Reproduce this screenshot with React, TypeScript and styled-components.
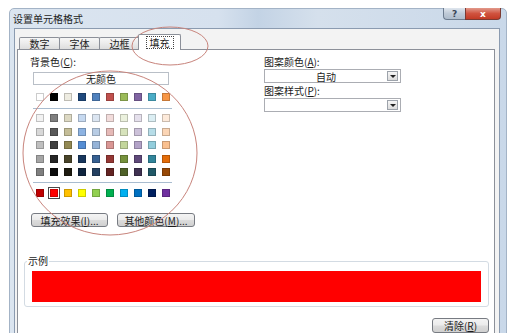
import React from 'react';
import styled, { createGlobalStyle, css } from 'styled-components';

const GlobalStyle = createGlobalStyle`
    html, body {
        margin: 0;
        padding: 0;
        background: #ffffff;
    }
    body {
        width: 508px;
        height: 333px;
        overflow: hidden;
        position: relative;
        font-family: "Noto Sans CJK SC", "Liberation Sans", sans-serif;
        font-size: 10px;
        color: #1b1b1b;
    }
`;

const Window = styled.div`
    margin: 8px 0 0 9px;
    width: 498px;
    height: 340px;
    box-sizing: border-box;
    border: 1px solid #a3b3c6;
    border-radius: 5px 5px 0 0;
    background: linear-gradient(90deg, #dbe5f0 0%, #d6e1ee 42%, #c3d3e5 50%, #d5e0ec 62%, #c9d8e9 100%);
    padding: 0 6px 0 4px;
    display: flex;
    flex-direction: column;
`;

const TitleBar = styled.div`
    height: 19px;
    display: flex;
    align-items: flex-start;
`;

const Title = styled.span`
    line-height: 19px;
    margin-left: -1px;
    color: #1e1e1e;
`;

const CaptionButtons = styled.div`
    margin: -1px -1px 0 auto;
    display: flex;
`;

const CaptionButton = styled.div<{ $close?: boolean }>`
    height: 12px;
    width: ${(p) => (p.$close ? '36px' : '22px')};
    box-sizing: border-box;
    display: flex;
    align-items: center;
    justify-content: center;
    font-family: "DejaVu Sans", sans-serif;
    font-weight: bold;
    font-size: 9px;
    color: #ffffff;
    border: 1px solid #6d7c8f;
    border-top: none;
    ${(p) =>
        p.$close
            ? css`
                  border-radius: 0 0 4px 0;
                  background: linear-gradient(180deg, #e29a8c 0%, #d0533f 50%, #c23a25 100%);
                  border-color: #7b3a32;
              `
            : css`
                  border-radius: 0 0 0 4px;
                  border-right: none;
                  background: linear-gradient(180deg, #dfe6ee 0%, #bfcad7 50%, #aebccc 100%);
                  color: #3a4656;
              `}
`;

const Client = styled.div`
    flex: 1;
    border: 1px solid #8b9bb0;
    background: #f3f3f3;
    padding: 0 4px 0 2px;
    display: flex;
    flex-direction: column;
`;

const TabRow = styled.div`
    height: 20px;
    padding-left: 2px;
    display: flex;
    align-items: flex-end;
`;

const Tab = styled.div<{ $active?: boolean }>`
    width: 41px;
    height: 12px;
    box-sizing: border-box;
    border: 1px solid #8c9099;
    border-bottom: none;
    border-radius: 2px 2px 0 0;
    background: linear-gradient(180deg, #f7f7f7 0%, #ebebeb 50%, #dddddd 100%);
    display: flex;
    align-items: center;
    justify-content: center;
    line-height: 11px;
    margin-right: -1px;
    ${(p) =>
        p.$active &&
        css`
            height: 16px;
            margin: 0 -2px -1px -1px;
            width: 43px;
            background: #ffffff;
            position: relative;
            z-index: 1;
        `}
`;

const FocusLabel = styled.span`
    outline: 1px dotted #444;
    padding: 0 3px;
    line-height: 11px;
`;

const Panel = styled.div`
    flex: 1;
    background: #ffffff;
    border: 1px solid #8c9099;
    display: flex;
    flex-direction: column;
`;

const Body = styled.div`
    display: grid;
    grid-template-columns: 234px 1fr;
    padding: 6px 0 0 12px;
`;

const Column = styled.div`
    display: flex;
    flex-direction: column;
    align-items: flex-start;
`;

const Label = styled.div<{ $top?: number }>`
    line-height: 12px;
    margin-top: ${(p) => p.$top ?? 0}px;
    white-space: nowrap;
`;

const NoColorBox = styled.div`
    margin: 4px 0 0 3px;
    width: 136px;
    height: 13px;
    box-sizing: border-box;
    border: 1px solid #b9bfc7;
    display: flex;
    align-items: center;
    justify-content: center;
    line-height: 11px;
`;

const SwatchGrid = styled.div<{ $top: number }>`
    margin: ${(p) => p.$top}px 0 0 6px;
    display: grid;
    grid-template-columns: repeat(10, 8px);
    column-gap: 6px;
    row-gap: 5.5px;
`;

const Swatch = styled.div<{ $c: string; $selected?: boolean }>`
    width: 8px;
    height: 8px;
    box-sizing: border-box;
    background: ${(p) => p.$c};
    border: 1px solid rgba(0, 0, 0, 0.2);
    ${(p) =>
        p.$selected &&
        css`
            outline: 1px solid #4a4a4a;
            outline-offset: 1px;
        `}
`;

const Separator = styled.div<{ $top: number }>`
    margin: ${(p) => p.$top}px 0 0 3px;
    width: 139px;
    height: 1px;
    background: #a9bccf;
`;

const ButtonRow = styled.div`
    margin: 16px 0 0 1px;
    display: flex;
    gap: 9px;
`;

const Button = styled.div<{ $w: number; $h?: number }>`
    width: ${(p) => p.$w}px;
    height: ${(p) => p.$h ?? 14}px;
    box-sizing: border-box;
    border: 1px solid #777b82;
    border-radius: 3px;
    background: linear-gradient(180deg, #f4f4f4 0%, #ebebeb 48%, #dcdcdc 52%, #d0d0d0 100%);
    display: flex;
    align-items: center;
    justify-content: center;
    line-height: 11px;
    white-space: nowrap;
`;

const Combo = styled.div<{ $top: number }>`
    margin-top: ${(p) => p.$top}px;
    width: 137px;
    height: 14px;
    box-sizing: border-box;
    border: 1px solid #abadb3;
    background: #ffffff;
    display: flex;
    align-items: center;
`;

const ComboText = styled.span`
    flex: 1;
    text-align: center;
    line-height: 11px;
`;

const DropButton = styled.div`
    width: 11px;
    height: 10px;
    margin-right: 2px;
    box-sizing: border-box;
    border: 1px solid #9da3ab;
    background: linear-gradient(180deg, #f6f6f6, #dcdcdc);
    display: flex;
    align-items: center;
    justify-content: center;

    &::after {
        content: '';
        border-left: 3px solid transparent;
        border-right: 3px solid transparent;
        border-top: 3px solid #222;
    }
`;

const Sample = styled.fieldset`
    margin: 28px 0 0 6px;
    width: 465px;
    box-sizing: border-box;
    border: 1px solid #d3dbe3;
    border-radius: 3px;
    padding: 0 7px 4px 7px;

    legend {
        margin-left: -5px;
        padding: 0 1px;
        line-height: 12px;
    }
`;

const SampleFill = styled.div<{ $c: string }>`
    margin-top: 4px;
    height: 31px;
    background: ${(p) => p.$c};
`;

const ClearRow = styled.div`
    display: flex;
    justify-content: flex-end;
    margin: 11px 5px 0 0;
`;

const Annotations = styled.svg`
    position: absolute;
    left: 0;
    top: 0;
    pointer-events: none;
`;

const themeRow = ['#ffffff', '#000000', '#eeece1', '#1f497d', '#4f81bd', '#c0504d', '#9bbb59', '#8064a2', '#4bacc6', '#f79646'];

const tintRows = [
    ['#f2f2f2', '#7f7f7f', '#ddd9c3', '#c6d9f0', '#dbe5f1', '#f2dcdb', '#ebf1dd', '#e5e0ec', '#dbeef3', '#fdeada'],
    ['#d8d8d8', '#595959', '#c4bd97', '#8db3e2', '#b8cce4', '#e5b9b7', '#d7e3bc', '#ccc1d9', '#b7dde8', '#fbd5b5'],
    ['#bfbfbf', '#3f3f3f', '#938953', '#548dd4', '#95b3d7', '#d99694', '#c3d69b', '#b2a2c7', '#92cddc', '#fac08f'],
    ['#a5a5a5', '#262626', '#494429', '#17365d', '#366092', '#953734', '#76923c', '#5f497a', '#31859b', '#e36c09'],
    ['#7f7f7f', '#0c0c0c', '#1d1b10', '#0f243e', '#244061', '#632423', '#4f6128', '#3f3151', '#205867', '#974806'],
];

const standardRow = ['#c00000', '#ff0000', '#ffc000', '#ffff00', '#92d050', '#00b050', '#00b0f0', '#0070c0', '#002060', '#7030a0'];

const tabs = ['数字', '字体', '边框', '填充'];

const App = () => {
    const selected = '#ff0000';

    return (
        <>
            <GlobalStyle />
            <Window>
                <TitleBar>
                    <Title>设置单元格格式</Title>
                    <CaptionButtons>
                        <CaptionButton>?</CaptionButton>
                        <CaptionButton $close>x</CaptionButton>
                    </CaptionButtons>
                </TitleBar>
                <Client>
                    <TabRow>
                        {tabs.map((t, i) =>
                            i === tabs.length - 1 ? (
                                <Tab key={t} $active>
                                    <FocusLabel>{t}</FocusLabel>
                                </Tab>
                            ) : (
                                <Tab key={t}>{t}</Tab>
                            )
                        )}
                    </TabRow>
                    <Panel>
                        <Body>
                            <Column>
                                <Label>背景色(<u>C</u>):</Label>
                                <NoColorBox>无颜色</NoColorBox>
                                <SwatchGrid $top={8}>
                                    {themeRow.map((c, i) => (
                                        <Swatch key={i} $c={c} />
                                    ))}
                                </SwatchGrid>
                                <Separator $top={7} />
                                <SwatchGrid $top={5}>
                                    {tintRows.flat().map((c, i) => (
                                        <Swatch key={i} $c={c} />
                                    ))}
                                </SwatchGrid>
                                <Separator $top={6} />
                                <SwatchGrid $top={6}>
                                    {standardRow.map((c, i) => (
                                        <Swatch key={i} $c={c} $selected={c === selected} />
                                    ))}
                                </SwatchGrid>
                                <ButtonRow>
                                    <Button $w={77}>填充效果(<u>I</u>)...</Button>
                                    <Button $w={78}>其他颜色(<u>M</u>)...</Button>
                                </ButtonRow>
                            </Column>
                            <Column>
                                <Label>图案颜色(<u>A</u>):</Label>
                                <Combo $top={1}>
                                    <ComboText>自动</ComboText>
                                    <DropButton />
                                </Combo>
                                <Label $top={2}>图案样式(<u>P</u>):</Label>
                                <Combo $top={1}>
                                    <ComboText />
                                    <DropButton />
                                </Combo>
                            </Column>
                        </Body>
                        <Sample>
                            <legend>示例</legend>
                            <SampleFill $c={selected} />
                        </Sample>
                        <ClearRow>
                            <Button $w={57} $h={15}>清除(<u>R</u>)</Button>
                        </ClearRow>
                    </Panel>
                </Client>
            </Window>
            {/* 빨간 표시 원 */}
            <Annotations width="508" height="333" viewBox="0 0 508 333">
                <ellipse cx="170" cy="46" rx="38" ry="19" fill="none" stroke="#c8847c" strokeWidth="1" />
                <ellipse cx="110" cy="153" rx="87" ry="82" fill="none" stroke="#c8847c" strokeWidth="1" />
            </Annotations>
        </>
    );
};

export default App;
